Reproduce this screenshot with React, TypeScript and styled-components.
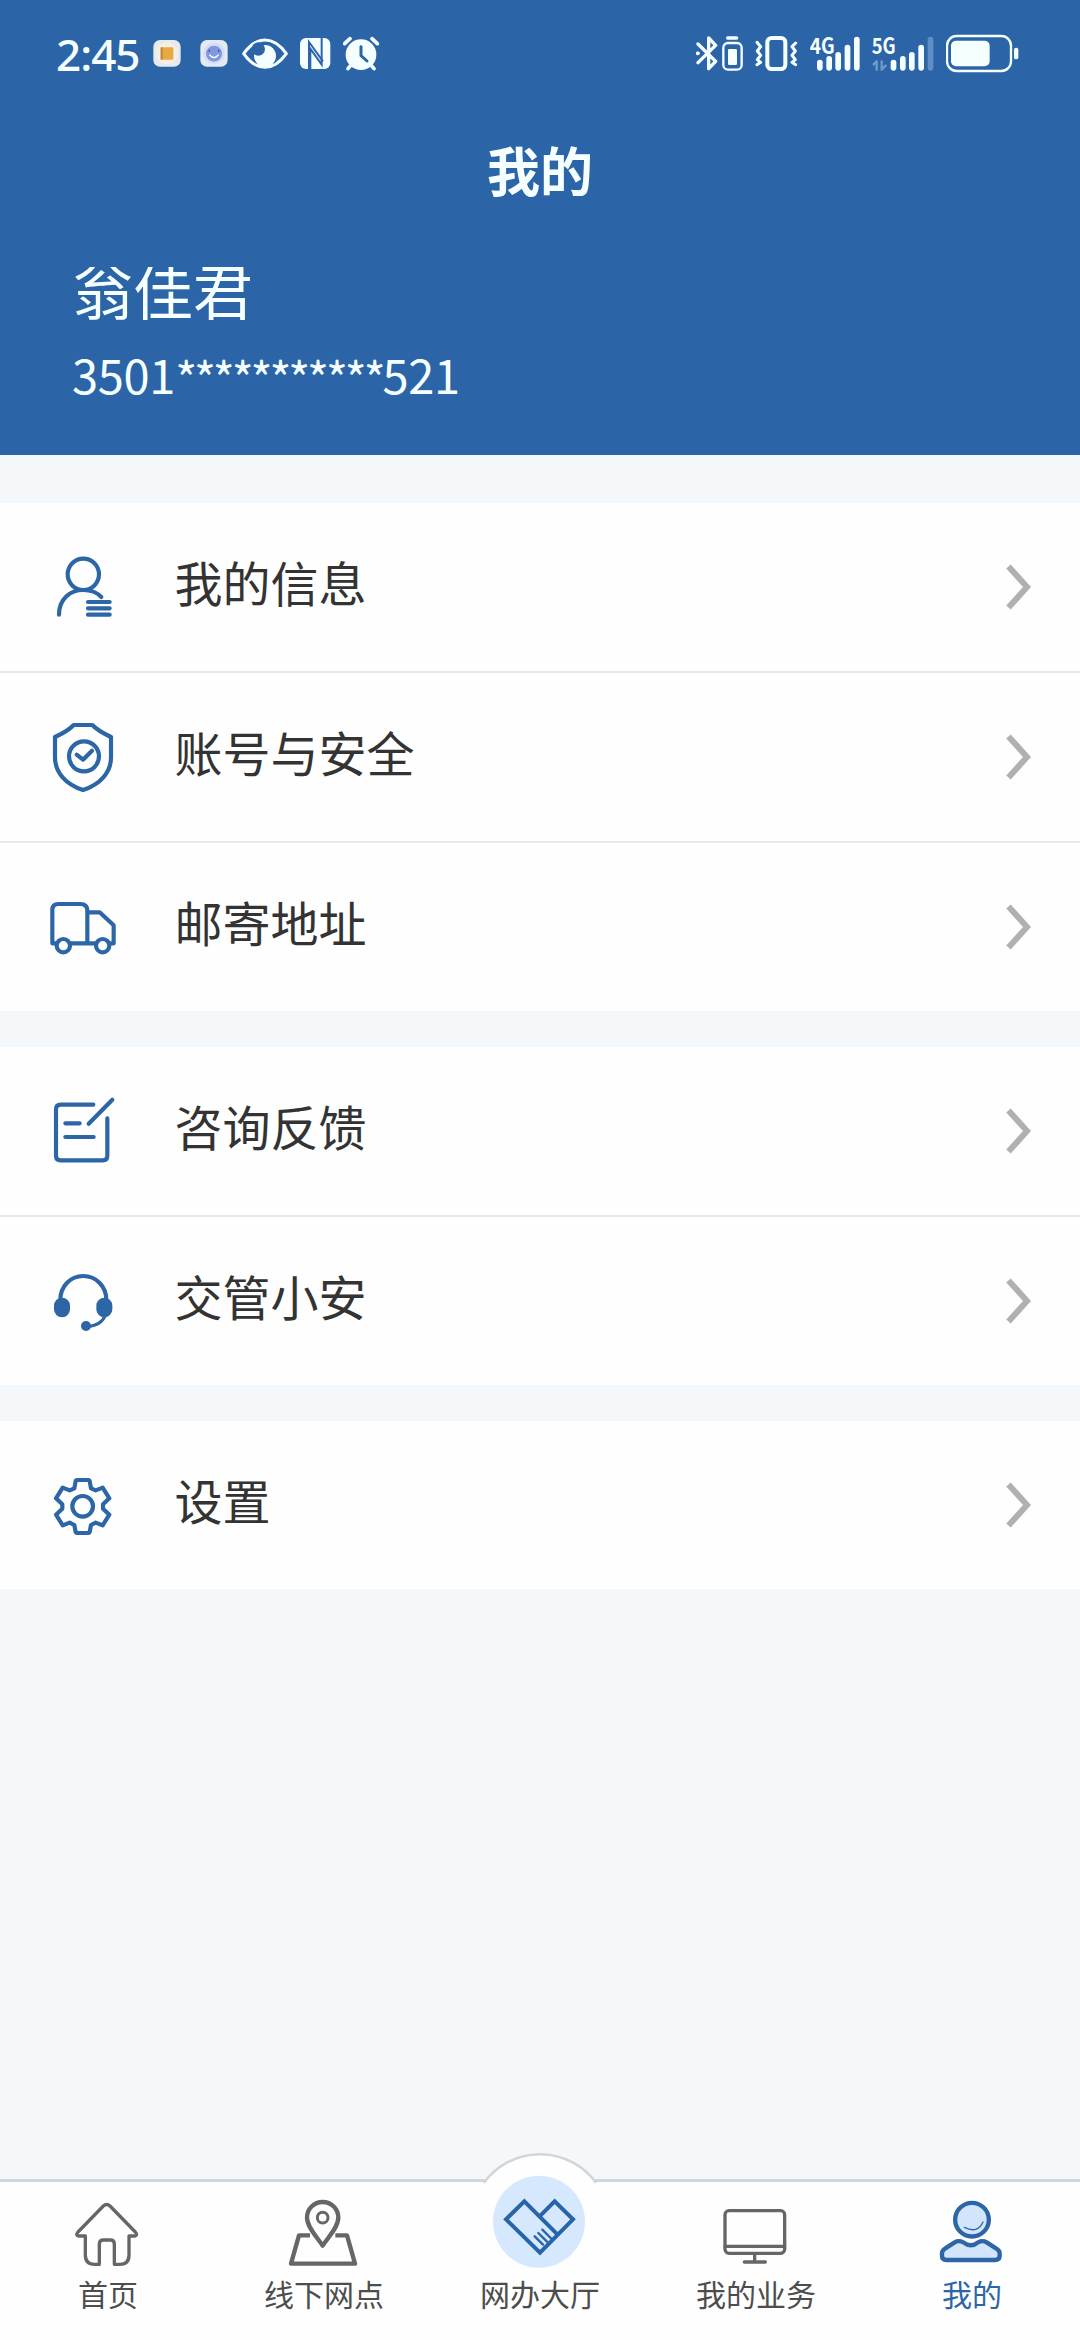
import React from "react";
import styled, { createGlobalStyle } from "styled-components";

const BLUE = "#2c65a7";
const ICON_BLUE = "#2c66a6";
const ICON_GREY = "#666666";
const HEADER_TEXT = "#f6ffff";

const GlobalStyle = createGlobalStyle`
  html, body { margin: 0; padding: 0; }
  * { box-sizing: border-box; }
`;

const Screen = styled.div`
  width: 1080px;
  height: 2340px;
  display: flex;
  flex-direction: column;
  background: #f4f8fa;
  overflow: hidden;
  font-family: "Noto Sans CJK SC", "Noto Sans", sans-serif;
  color: #333333;
`;

const Header = styled.header`
  height: 455px;
  flex: none;
  background: ${BLUE};
  color: ${HEADER_TEXT};
  display: flex;
  flex-direction: column;
`;

const StatusBar = styled.div`
  display: flex;
  justify-content: space-between;
  height: 90px;
  padding: 20px 61px 0 56px;
`;

const StatusGroup = styled.div`
  display: flex;
  gap: 12px;
`;

const Clock = styled.div`
  width: 85px;
  font-family: "Noto Sans", "Noto Sans CJK SC", sans-serif;
  font-size: 44px;
  font-weight: 500;
  line-height: 69px;
  letter-spacing: -1px;
  white-space: nowrap;
`;

const StatusSvg = styled.svg<{ $w: number }>`
  display: block;
  flex: none;
  width: ${(p) => p.$w / 3}px;
  height: 70px;
  fill: none;
  stroke: ${HEADER_TEXT};
  stroke-linecap: round;
  stroke-linejoin: round;
`;

const Title = styled.h1`
  margin: 0;
  height: 164px;
  padding-top: 41px;
  font-size: 53px;
  font-weight: 700;
  line-height: 76px;
  text-align: center;
`;

const UserName = styled.div`
  margin: 13px 0 0 73px;
  height: 62px;
  overflow: hidden;
  font-size: 60px;
  line-height: 43px;
`;

const IdNumber = styled.div`
  margin: 12px 0 0 72px;
  font-size: 47px;
  line-height: 66px;
  letter-spacing: -0.3px;
  white-space: nowrap;
`;

const Mask = styled.span`
  position: relative;
  top: 3px;
  letter-spacing: -3.1px;
`;

const Menu = styled.main`
  flex: 1;
  display: flex;
  flex-direction: column;
  gap: 36px;
  padding-top: 48px;
`;

const Group = styled.section`
  background: #fefefe;
`;

const Row = styled.div`
  display: flex;
  align-items: center;
  height: 168px;
  padding: 0 49px 0 44px;

  & + & {
    height: 170px;
    border-top: 2px solid #e8eaea;
  }
`;

const RowIcon = styled.svg`
  width: 78px;
  height: 78px;
  flex: none;
  fill: none;
  stroke: ${ICON_BLUE};
  stroke-width: 12.5;
  stroke-linecap: round;
  stroke-linejoin: round;
`;

const RowLabel = styled.span`
  flex: 1;
  margin-left: 52.5px;
  padding-bottom: 12px;
  font-size: 48px;
  line-height: 70px;
`;

const Chevron = styled.svg`
  width: 25px;
  height: 46px;
  flex: none;
  fill: none;
  stroke: #b0b0b0;
  stroke-width: 6;
`;

const TabBar = styled.nav`
  position: relative;
  flex: none;
  display: grid;
  grid-template-columns: repeat(5, 1fr);
  height: 161px;
  border-top: 3px solid #d2d6d8;
  background: #fefefe;
`;

const Bump = styled.svg`
  position: absolute;
  left: 480px;
  top: -32px;
  width: 120px;
  height: 40px;
  fill: none;
`;

const Tab = styled.div<{ $active?: boolean }>`
  position: relative;
  display: flex;
  flex-direction: column;
  align-items: center;
  padding-top: 14px;
  color: ${(p) => (p.$active ? ICON_BLUE : "#4d4d4d")};
`;

const TabIcon = styled.svg`
  width: 80px;
  height: 80px;
  overflow: visible;
  fill: none;
  stroke: ${ICON_GREY};
  stroke-width: 10;
  stroke-linejoin: round;
`;

const TabLabel = styled.span`
  font-size: 30px;
  line-height: 35px;
`;

const InfoIcon = () => (
  <RowIcon viewBox="42 54 234 234">
    <circle cx="160" cy="133" r="47" />
    <path d="M87 254C87 207 120 180 160 180C182 180 202 188 214 201M174 216H239M174 235H239M174 254H239" />
  </RowIcon>
);

const ShieldIcon = () => (
  <RowIcon viewBox="42 564 234 234">
    <path d="M131 585H187C200 599 222 611 243 621V682C243 728 210 763 159 780C108 763 75 728 75 682V621C97 611 118 599 131 585Z" />
    <circle cx="162" cy="679" r="45" />
    <path d="M140 674L159 689L186 662" />
  </RowIcon>
);

const TruckIcon = () => (
  <RowIcon viewBox="42 84 234 234">
    <path d="M67 249V150Q67 132 85 132H151Q172 132 172 152V249M172 157H209L251 196V250H67" />
    <circle cx="100" cy="257" r="20" fill="#fefefe" />
    <circle cx="218" cy="257" r="20" fill="#fefefe" />
  </RowIcon>
);

const FeedbackIcon = () => (
  <RowIcon viewBox="42 66 234 234">
    <path d="M190 104H92Q78 104 78 118V258Q78 271 92 271H218Q232 271 232 258V145M176 161L247 89M106 160H149M106 201H191" />
  </RowIcon>
);

const HeadsetIcon = () => (
  <RowIcon viewBox="42 576 234 234">
    <path d="M91 690C91 650 120 618 160 618C199 618 229 650 229 690" />
    <path d="M226 736C217 758 197 768 170 770" strokeWidth="9" />
    <g fill={ICON_BLUE} stroke="none">
      <rect x="72" y="683" width="48" height="59" rx="24" />
      <rect x="199" y="683" width="48" height="59" rx="24" />
      <circle cx="168" cy="768" r="15" />
    </g>
  </RowIcon>
);

const GearIcon = () => (
  <RowIcon viewBox="42 198 234 234">
    <path d="M141 240H175Q178 240 179 243L183 265L197 271L218 263L238 295L219 313V326L238 344L218 376L197 368L183 375L179 396Q178 399 175 399H141Q138 399 137 396L133 375L119 368L98 376L78 344L97 326V313L78 295L98 263L119 271L133 265L137 243Q138 240 141 240Z" />
    <circle cx="158" cy="319" r="31" />
  </RowIcon>
);

const HomeTabIcon = () => (
  <TabIcon viewBox="204 168 240 240">
    <path d="M302 373H284Q256 373 256 345V288H235Q226 285 234 276L310 198Q320 189 330 198L406 276Q414 285 405 288H387V345Q387 373 360 373H343V312Q343 300 331 300H310Q298 300 298 312V373" />
  </TabIcon>
);

const MapTabIcon = () => (
  <TabIcon viewBox="852 168 240 240">
    <path d="M930 286H897L873 371H1065L1041 286H1006" strokeWidth="13" />
    <path d="M968 317C955 296 921 262 921 233A47 47 0 1 1 1015 233C1015 262 981 296 968 317Z" strokeWidth="13" />
    <circle cx="968" cy="233" r="16" strokeWidth="9" />
  </TabIcon>
);

const HallTabIcon = () => (
  <TabIcon viewBox="300 168 240 240">
    <circle cx="417" cy="245" r="138" fill="#d6e8fd" stroke="none" />
    <g stroke="#2765a8" strokeLinejoin="miter">
      <path d="M470 281L373 184L318 238L420 338L519 238L464 184L421 227" strokeWidth="12" />
      <path d="M404 289L429 314M415 279L441 305M427 269L455 297" strokeWidth="7" strokeLinecap="round" />
    </g>
  </TabIcon>
);

const MonitorTabIcon = () => (
  <TabIcon viewBox="108 168 240 240" strokeLinecap="round">
    <rect x="135" y="212" width="179" height="128" rx="12" />
    <path d="M135 319H314M224 342V362M193 366H256" />
  </TabIcon>
);

const MineTabIcon = () => (
  <TabIcon viewBox="756 168 240 240">
    <g stroke={ICON_BLUE} fill="#d3e5fc" strokeWidth="13">
      <circle cx="876" cy="239" r="50.5" />
      <path d="M800 360Q786 360 786 348V340Q786 331 796 325L824 307Q836 300 850 307Q873 325 894 307Q908 300 920 307L948 325Q959 331 959 340V348Q959 360 945 360Z" />
      <path d="M853 262Q893 282 909 246" fill="none" strokeWidth="4" strokeLinecap="round" />
    </g>
  </TabIcon>
);

const LeftStatus = () => (
  <StatusGroup>
    <Clock>2:45</Clock>
    <StatusSvg $w={106} viewBox="340 0 106 210">
      <g stroke="none">
        <rect x="341" y="60" width="82" height="80" rx="20" fill="#e6e9ee" />
        <circle cx="382" cy="100" r="33" fill="#f5eee4" />
        <rect x="363" y="82" width="38" height="37" rx="3" fill="#e9a941" />
        <rect x="363" y="82" width="6" height="37" fill="#b98a43" />
      </g>
    </StatusSvg>
    <StatusSvg $w={88} viewBox="482 0 88 210">
      <g stroke="none">
        <rect x="483" y="60" width="82" height="80" rx="20" fill="#e4e9f2" />
        <circle cx="524" cy="100" r="32" fill="#d5def5" />
        <circle cx="524" cy="101" r="24" fill="#8297e2" />
      </g>
      <path d="M511 105Q524 120 537 105" strokeWidth="4" />
      <path d="M510 91V93M538 91V93" stroke="#33406e" strokeWidth="4" />
    </StatusSvg>
    <StatusSvg $w={139} viewBox="606 0 139 210">
      <path d="M611 101Q640 60 675 60Q710 60 739 101Q710 142 675 142Q640 142 611 101Z" strokeWidth="9" />
      <circle cx="675" cy="108" r="33" fill={HEADER_TEXT} stroke="none" />
      <circle cx="655" cy="87" r="20" fill={BLUE} stroke="none" />
    </StatusSvg>
    <StatusSvg $w={92} viewBox="781 0 92 210">
      <rect x="781" y="54" width="91" height="93" rx="18" fill={HEADER_TEXT} stroke="none" />
      <path d="M808 150V66L850 124" stroke={BLUE} strokeWidth="6" strokeLinejoin="miter" strokeLinecap="butt" />
      <path d="M846 50V134L812 86V150" stroke={BLUE} strokeWidth="6" strokeLinejoin="miter" strokeLinecap="butt" />
    </StatusSvg>
    <StatusSvg $w={112} viewBox="909 0 112 210">
      <circle cx="963" cy="104" r="46" fill={HEADER_TEXT} stroke="none" />
      <path d="M914 71L930 56M996 56L1012 71M924 146L934 134M1002 146L992 134" strokeWidth="11" />
      <path d="M963 80V107L981 123" stroke={BLUE} strokeWidth="9" />
    </StatusSvg>
  </StatusGroup>
);

interface SignalProps {
  xs: number[];
  tops: number[];
}

const SignalBars = ({ xs, tops }: SignalProps) => (
  <g fill={HEADER_TEXT} stroke="none">
    {xs.map((x, i) => (
      <rect key={x} x={x} y={tops[i]} width="17" height={152 - tops[i]} rx="8.5" />
    ))}
  </g>
);

const NetworkText = styled.text`
  font-family: "Noto Sans CJK SC", sans-serif;
  font-size: 66px;
  font-weight: 700;
  fill: ${HEADER_TEXT};
  stroke: none;
`;

const RightStatus = () => (
  <StatusGroup>
    <StatusSvg $w={140} viewBox="48 0 140 210">
      <path d="M54 72L107 124L86 146V54L107 76L54 128" strokeWidth="10" />
      <path d="M53 100H54" strokeWidth="11" />
      <rect x="130" y="69" width="55" height="80" rx="14" strokeWidth="7" />
      <path d="M143 54H170" strokeWidth="10" />
      <rect x="144" y="87" width="27" height="48" rx="4" fill={HEADER_TEXT} stroke="none" />
    </StatusSvg>
    <StatusSvg $w={128} viewBox="224 0 128 210">
      <rect x="261" y="54" width="54" height="93" rx="13" strokeWidth="12" />
      <path d="M230 67L241 80L231 93L241 106L231 119L241 127L230 134M346 69L335 80L345 93L335 106L345 119L335 127L346 134" strokeWidth="9" />
    </StatusSvg>
    <StatusSvg $w={150} viewBox="388 0 150 210">
      <NetworkText x="387" y="101" textLength="75" lengthAdjust="spacingAndGlyphs">4G</NetworkText>
      <SignalBars xs={[409, 437, 464, 492, 520]} tops={[119, 108, 96, 74, 50]} />
    </StatusSvg>
    <StatusSvg $w={186} viewBox="574 0 186 210">
      <NetworkText x="573" y="101" textLength="72" lengthAdjust="spacingAndGlyphs">5G</NetworkText>
      <path d="M579 133L588 124V149M603 124V149L615 137" stroke="#6f9bcd" strokeWidth="7" />
      <SignalBars xs={[630, 658, 685, 713]} tops={[119, 108, 96, 74]} />
      <rect x="741" y="50" width="17" height="102" rx="8.5" fill="#5f8fc6" stroke="none" />
    </StatusSvg>
    <StatusSvg $w={220} viewBox="796 0 220 210">
      <rect x="799" y="48" width="192" height="105" rx="29" strokeWidth="7" />
      <rect x="811" y="62" width="116" height="77" rx="15" fill={HEADER_TEXT} stroke="none" />
      <rect x="1000" y="83" width="13" height="35" rx="6.5" fill={HEADER_TEXT} stroke="none" />
    </StatusSvg>
  </StatusGroup>
);

const groups = [
  [
    { label: "我的信息", Icon: InfoIcon },
    { label: "账号与安全", Icon: ShieldIcon },
    { label: "邮寄地址", Icon: TruckIcon },
  ],
  [
    { label: "咨询反馈", Icon: FeedbackIcon },
    { label: "交管小安", Icon: HeadsetIcon },
  ],
  [{ label: "设置", Icon: GearIcon }],
];

const tabs = [
  { label: "首页", Icon: HomeTabIcon },
  { label: "线下网点", Icon: MapTabIcon },
  { label: "网办大厅", Icon: HallTabIcon },
  { label: "我的业务", Icon: MonitorTabIcon },
  { label: "我的", Icon: MineTabIcon, active: true },
];

export default function App() {
  return (
    <Screen>
      <GlobalStyle />
      <Header>
        <StatusBar>
          <LeftStatus />
          <RightStatus />
        </StatusBar>
        <Title>我的</Title>
        <UserName>翁佳君</UserName>
        <IdNumber>
          3501<Mask>***********</Mask>521
        </IdNumber>
      </Header>
      <Menu>
        {groups.map((rows) => (
          <Group key={rows[0].label}>
            {rows.map(({ label, Icon }) => (
              <Row key={label}>
                <Icon />
                <RowLabel>{label}</RowLabel>
                <Chevron viewBox="0 0 25 46">
                  <path d="M2.5 2.5L21 23L2.5 43.5" />
                </Chevron>
              </Row>
            ))}
          </Group>
        ))}
      </Menu>
      <TabBar>
        <Bump viewBox="240 30 360 120">
          <path d="M252 150V129L256 124A203 203 0 0 1 585 124L589 129V150Z" fill="#fefefe" />
          <path d="M252 128A208 208 0 0 1 588 128" stroke="#d2d6d8" strokeWidth="8" />
        </Bump>
        {tabs.map(({ label, Icon, active }) => (
          <Tab key={label} $active={active}>
            <Icon />
            <TabLabel>{label}</TabLabel>
          </Tab>
        ))}
      </TabBar>
    </Screen>
  );
}
